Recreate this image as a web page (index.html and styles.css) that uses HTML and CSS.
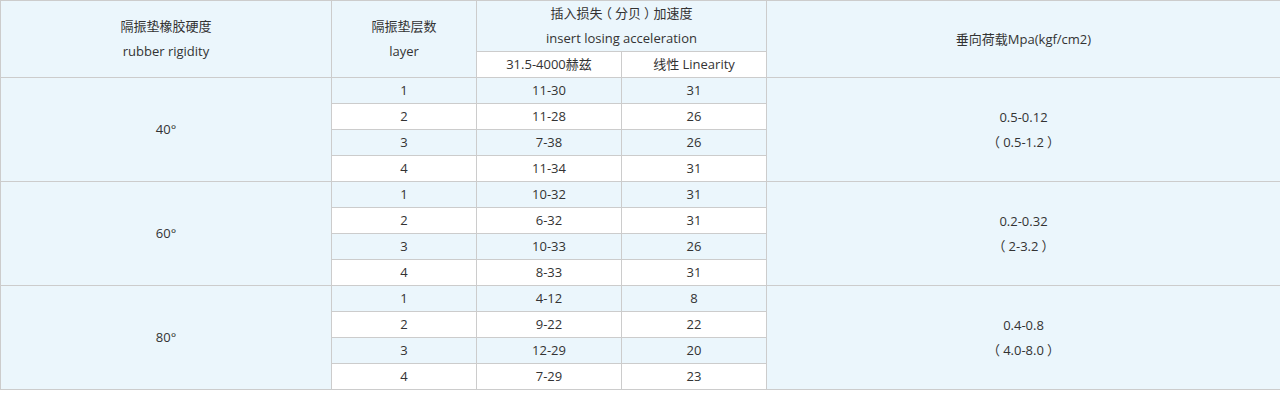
FILE: index.html
```html
<!DOCTYPE html>
<html lang="zh">
<head>
<meta charset="utf-8">
<title>隔振垫</title>
<link rel="stylesheet" href="styles.css">
</head>
<body>
<table class="spec">
  <colgroup>
    <col class="c1"><col class="c2"><col class="c3"><col class="c4"><col class="c5">
  </colgroup>
  <thead>
    <tr class="h1">
      <th rowspan="2">隔振垫橡胶硬度<br>rubber rigidity</th>
      <th rowspan="2">隔振垫层数<br>layer</th>
      <th colspan="2">插入损失<span class="par">（</span>分贝<span class="par">）</span>加速度<br>insert losing acceleration</th>
      <th rowspan="2">垂向荷载Mpa(kgf/cm2)</th>
    </tr>
    <tr class="h2">
      <th class="white">31.5-4000赫兹</th>
      <th class="white">线性 Linearity</th>
    </tr>
  </thead>
  <tbody>
    <tr class="odd"><td rowspan="4" class="blue">40°</td><td>1</td><td>11-30</td><td>31</td><td rowspan="4" class="blue">0.5-0.12<br><span class="par">（</span>0.5-1.2<span class="par">）</span></td></tr>
    <tr><td>2</td><td>11-28</td><td>26</td></tr>
    <tr class="odd"><td>3</td><td>7-38</td><td>26</td></tr>
    <tr><td>4</td><td>11-34</td><td>31</td></tr>
    <tr class="odd"><td rowspan="4" class="blue">60°</td><td>1</td><td>10-32</td><td>31</td><td rowspan="4" class="blue">0.2-0.32<br><span class="par">（</span>2-3.2<span class="par">）</span></td></tr>
    <tr><td>2</td><td>6-32</td><td>31</td></tr>
    <tr class="odd"><td>3</td><td>10-33</td><td>26</td></tr>
    <tr><td>4</td><td>8-33</td><td>31</td></tr>
    <tr class="odd"><td rowspan="4" class="blue">80°</td><td>1</td><td>4-12</td><td>8</td><td rowspan="4" class="blue">0.4-0.8<br><span class="par">（</span>4.0-8.0<span class="par">）</span></td></tr>
    <tr><td>2</td><td>9-22</td><td>22</td></tr>
    <tr class="odd"><td>3</td><td>12-29</td><td>20</td></tr>
    <tr><td>4</td><td>7-29</td><td>23</td></tr>
  </tbody>
</table>
</body>
</html>
```
FILE: styles.css
```css
html, body {
  margin: 0;
  padding: 0;
  background: #ffffff;
}
body {
  font-family: "Open Sans", "Noto Sans CJK SC", sans-serif;
  font-size: 13px;
  color: #333333;
}
.spec {
  border-collapse: collapse;
  width: 1280px;
  table-layout: fixed;
}
.c1 { width: 331px; }
.c2 { width: 145px; }
.c3 { width: 145px; }
.c4 { width: 145px; }
.c5 { width: 514px; }
.spec th, .spec td {
  border: 1px solid #cccccc;
  text-align: center;
  vertical-align: middle;
  font-weight: normal;
  padding: 0;
  line-height: 25px;
}
.spec thead th {
  background: #ebf6fc;
}
.spec thead th.white {
  background: #ffffff;
}
.spec .h1 th { height: 50px; }
.spec .h2 th { height: 25px; }
.spec tbody td { height: 25px; background: #ffffff; }
.spec tbody tr.odd td { background: #ebf6fc; }
.spec tbody td.blue { background: #ebf6fc; }
.par {
  font-feature-settings: "halt";
  margin: 0 3px;
}
```
